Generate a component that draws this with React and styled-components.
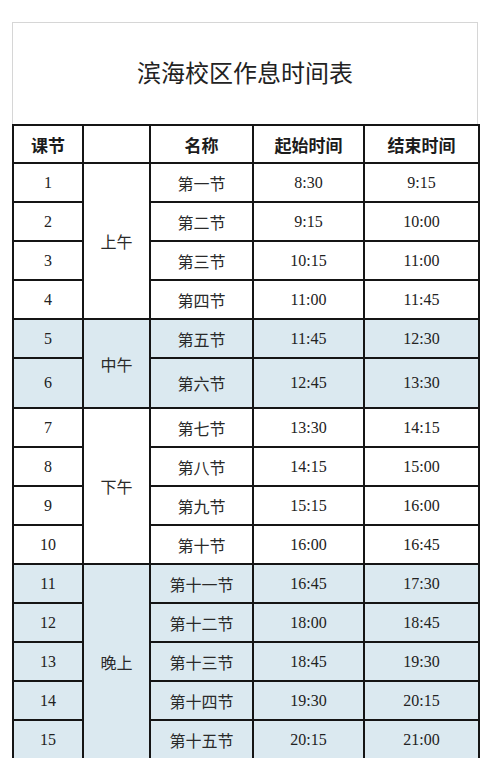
import React from 'react';
import styled, { createGlobalStyle } from 'styled-components';

const GlobalStyle = createGlobalStyle`
    html, body {
        margin: 0;
        padding: 0;
        background: #fff;
        overflow: hidden;
    }
    body {
        font-family: "Noto Sans CJK SC", "Noto Sans", sans-serif;
        color: #222;
    }
`;

const groups = [
    { label: '上午', shaded: false, rows: [
        ['1', '第一节', '8:30', '9:15'],
        ['2', '第二节', '9:15', '10:00'],
        ['3', '第三节', '10:15', '11:00'],
        ['4', '第四节', '11:00', '11:45'],
    ]},
    { label: '中午', shaded: true, rows: [
        ['5', '第五节', '11:45', '12:30'],
        ['6', '第六节', '12:45', '13:30', true],
    ]},
    { label: '下午', shaded: false, rows: [
        ['7', '第七节', '13:30', '14:15'],
        ['8', '第八节', '14:15', '15:00'],
        ['9', '第九节', '15:15', '16:00'],
        ['10', '第十节', '16:00', '16:45'],
    ]},
    { label: '晚上', shaded: true, rows: [
        ['11', '第十一节', '16:45', '17:30'],
        ['12', '第十二节', '18:00', '18:45'],
        ['13', '第十三节', '18:45', '19:30'],
        ['14', '第十四节', '19:30', '20:15'],
        ['15', '第十五节', '20:15', '21:00'],
    ]},
];

const Schedule = () => (
    <Page>
        <GlobalStyle />
        <Sheet>
            <TitleBox>滨海校区作息时间表</TitleBox>
            <Table>
                <colgroup>
                    <col style={{ width: 70 }} />
                    <col style={{ width: 67 }} />
                    <col style={{ width: 103 }} />
                    <col style={{ width: 111 }} />
                    <col style={{ width: 115 }} />
                </colgroup>
                <thead>
                    <tr>
                        <Head>课节</Head>
                        <Head></Head>
                        <Head>名称</Head>
                        <Head>起始时间</Head>
                        <Head>结束时间</Head>
                    </tr>
                </thead>
                <tbody>
                    {groups.map(g => g.rows.map((r, i) => (
                        <Row key={r[0]} $shaded={g.shaded} $tall={r[4]}>
                            <Num>{r[0]}</Num>
                            {i === 0 && <Group rowSpan={g.rows.length}>{g.label}</Group>}
                            <Name>{r[1]}</Name>
                            <Num>{r[2]}</Num>
                            <Num>{r[3]}</Num>
                        </Row>
                    )))}
                </tbody>
            </Table>
        </Sheet>
    </Page>
);

const Page = styled.div`
    width: 500px;
    height: 758px;
    overflow: hidden;
    padding: 22px 0 0 12px;
    box-sizing: border-box;
`;

const Sheet = styled.div`
    width: 466px;
`;

const TitleBox = styled.div`
    height: 102px;
    border: 1px solid #d6d6d6;
    border-bottom: none;
    display: flex;
    align-items: center;
    justify-content: center;
    font-size: 24px;
    color: #222;
    padding-bottom: 4px;
    box-sizing: border-box;
`;

const Table = styled.table`
    width: 466px;
    border-collapse: collapse;
    table-layout: fixed;

    td, th {
        border: 2px solid #151515;
        text-align: center;
        padding: 0;
    }
`;

const Head = styled.th`
    height: 36px;
    font-size: 17px;
    font-weight: 700;
    color: #1c1c1c;
    background: #fff;
`;

const Row = styled.tr`
    height: ${p => (p.$tall ? 50 : 39)}px;
    background: ${p => (p.$shaded ? '#dbe9f0' : '#fff')};
`;

const Num = styled.td`
    font-family: "Liberation Serif", "Times New Roman", serif;
    font-size: 16px;
    color: #222;
`;

const Name = styled.td`
    font-size: 16px;
    color: #2a2a2a;
`;

const Group = styled.td`
    font-size: 16px;
    color: #2a2a2a;
`;

export default Schedule;
